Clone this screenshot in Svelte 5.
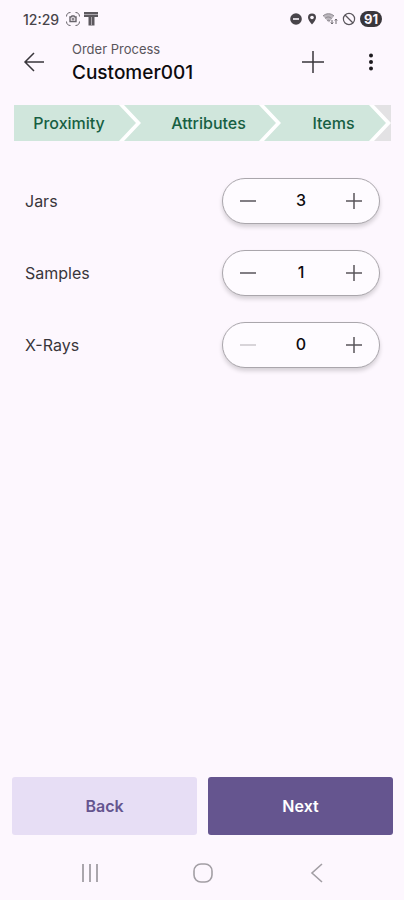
<script lang="ts">
  interface Item {
    id: string;
    name: string;
    count: number;
  }

  const steps = ['Proximity', 'Attributes', 'Items'];

  let items = $state<Item[]>([
    { id: 'jars', name: 'Jars', count: 3 },
    { id: 'samples', name: 'Samples', count: 1 },
    { id: 'xrays', name: 'X-Rays', count: 0 },
  ]);

  function change(item: Item, amount: number) {
    item.count = Math.max(0, item.count + amount);
  }
</script>

<div class="screen">
  <div class="status-bar">
    <span class="time">12:29</span>
    <svg class="capture" width="16" height="16" viewBox="0 0 16 16" fill="none" stroke="#67636a">
      <path d="M1.5 5.5C1.5 3 3 1.5 5.5 1.5M10.5 1.5C13 1.5 14.5 3 14.5 5.5M14.5 10.5C14.5 13 13 14.5 10.5 14.5M5.5 14.5C3 14.5 1.5 13 1.5 10.5" />
      <path d="M5 6h1l1-1h2l1 1h1v4.5H5z" stroke-width="1.4" />
      <circle cx="8" cy="8" r="1" />
    </svg>
    <svg width="16" height="16" viewBox="0 0 16 16">
      <path d="M1 1h14v5h-3.5v8.5h-6V6H1z" fill="#5c585e" />
      <path d="M1 3.5h14M8.5 6v8" stroke="#aaa5ac" />
    </svg>

    <div class="status-icons">
      <svg width="12" height="12" viewBox="0 0 12 12">
        <circle cx="6" cy="6" r="5.8" fill="#48444a" />
        <path d="M3 6h6" stroke="#d8d3da" stroke-width="2" />
      </svg>
      <svg width="12" height="12" viewBox="-1 0 12 12">
        <path d="M5 .5a4 4 0 0 0-4 4C1 7.2 5 11.5 5 11.5s4-4.3 4-7a4 4 0 0 0-4-4z" fill="#48444a" />
        <circle cx="5" cy="4.5" r="1.8" fill="#fcf7fd" />
      </svg>
      <svg width="16" height="14" viewBox="0 0 16 14">
        <path d="M1 4C4 1 9 1 12 4L7 10.5z" fill="#bbb6bd" />
        <path d="M1 4C4 1 9 1 12 4M3 6.5c2-2 4.5-2 6.5 0M5 9c1-1 2-1 3 0" fill="none" stroke="#8a858c" />
        <path d="M10 8v4M8.8 10.5 10 12l1.2-1.5M14 12V7M12.8 8.5 14 7l1.2 1.5" fill="none" stroke="#6c686e" />
      </svg>
      <svg width="14" height="14" viewBox="0 0 14 14" fill="none" stroke="#59555b" stroke-width="1.2">
        <circle cx="7" cy="7" r="5.6" />
        <path d="m3 3 8 8" />
      </svg>
      <span class="battery">91</span>
    </div>
  </div>

  <header>
    <button type="button" class="icon-btn" aria-label="Go back">
      <svg width="24" height="24" viewBox="0 0 24 24" fill="none" stroke="#39363b" stroke-width="1.5">
        <path d="M22 12H3M12 3l-9 9 9 9" />
      </svg>
    </button>
    <div class="titles">
      <p>Order Process</p>
      <h1>Customer001</h1>
    </div>
    <button type="button" class="icon-btn" aria-label="Add">
      <svg width="24" height="24" viewBox="0 0 24 24" stroke="#39363b" stroke-width="1.5">
        <path d="M12 1v22M1 12h22" />
      </svg>
    </button>
    <button type="button" class="icon-btn more" aria-label="More options">
      <svg width="24" height="24" viewBox="0 0 24 24" fill="#1d1a1f">
        <circle cx="12" cy="5.5" r="2" />
        <circle cx="12" cy="12" r="2" />
        <circle cx="12" cy="18.5" r="2" />
      </svg>
    </button>
  </header>

  <ol class="steps">
    {#each steps as step}
      <li>{step}</li>
    {/each}
    <li class="upcoming" aria-hidden="true"></li>
  </ol>

  <main>
    {#each items as item (item.id)}
      <div class="row">
        <span id={item.id}>{item.name}</span>
        <div class="counter" role="group" aria-labelledby={item.id}>
          <button
            type="button"
            aria-label="Remove one"
            disabled={item.count === 0}
            onclick={() => change(item, -1)}
          >
            <svg width="18" height="18" viewBox="0 0 18 18" stroke="currentColor" stroke-width="1.5">
              <path d="M1 9h16" />
            </svg>
          </button>
          <output>{item.count}</output>
          <button type="button" aria-label="Add one" onclick={() => change(item, 1)}>
            <svg width="18" height="18" viewBox="0 0 18 18" stroke="currentColor" stroke-width="1.5">
              <path d="M1 9h16M9 1v16" />
            </svg>
          </button>
        </div>
      </div>
    {/each}
  </main>

  <div class="actions">
    <button type="button" class="back">Back</button>
    <button type="button" class="next">Next</button>
  </div>

  <nav>
    <button type="button" aria-label="Recent apps">
      <svg width="22" height="22" viewBox="0 0 22 22" stroke="#aaa6ac" stroke-width="2">
        <path d="M4 2v18M11 2v18M18 2v18" />
      </svg>
    </button>
    <button type="button" aria-label="Home">
      <svg width="22" height="22" viewBox="0 0 22 22" fill="none" stroke="#a29ea4" stroke-width="1.6">
        <rect x="2" y="2" width="18" height="18" rx="7" />
      </svg>
    </button>
    <button type="button" aria-label="Back">
      <svg width="22" height="22" viewBox="0 0 22 22" fill="none" stroke="#a29ea4" stroke-width="1.6">
        <path d="M17 2 7 11l10 9" />
      </svg>
    </button>
  </nav>
</div>

<style>
  :global(body) {
    margin: 0;
    background: #fdf7fe;
  }

  .screen {
    display: flex;
    flex-direction: column;
    min-height: 100vh;
    font-family: Inter, Roboto, sans-serif;
    color: #1d1a1f;
  }

  button {
    display: flex;
    align-items: center;
    justify-content: center;
    padding: 0;
    border: none;
    background: none;
    font: inherit;
    color: inherit;
    cursor: pointer;
  }

  .status-bar {
    display: flex;
    align-items: center;
    gap: 2px;
    height: 38px;
    padding: 0 22px 0 23px;
    color: #48444a;
  }

  .time {
    font-size: 14px;
    font-weight: 500;
  }

  .capture {
    margin-left: 4px;
  }

  .status-icons {
    display: flex;
    align-items: center;
    gap: 4px;
    margin-left: auto;
  }

  .battery {
    padding: 0 4px;
    border-radius: 8px;
    background: #39363b;
    color: #fcf7fd;
    font-size: 13px;
    font-weight: 700;
    line-height: 16px;
  }

  header {
    display: flex;
    align-items: center;
    height: 48px;
    padding: 0 12px 0 13px;
  }

  .icon-btn {
    width: 42px;
    height: 42px;
  }

  .more {
    margin-left: 16px;
  }

  .titles {
    flex: 1;
    padding: 2px 0 0 17px;
  }

  p,
  h1 {
    margin: 0;
  }

  p {
    font-size: 13px;
    line-height: 20px;
    color: #59555b;
  }

  h1 {
    font-size: 19px;
    font-weight: 500;
    line-height: 28px;
    color: #0d0b0e;
  }

  .steps {
    display: flex;
    margin: 19px 13px 0 14px;
    padding: 0;
    list-style: none;
    background: #ffffff;
  }

  .steps li {
    flex: 21;
    display: flex;
    align-items: center;
    justify-content: center;
    box-sizing: border-box;
    height: 36px;
    margin-left: -12px;
    padding-left: 17px;
    background: #d0e6dc;
    color: #175f43;
    font-size: 16px;
    font-weight: 500;
    clip-path: polygon(0 0, calc(100% - 17px) 0, 100% 50%, calc(100% - 17px) 100%, 0 100%, 17px 50%);
  }

  .steps li:first-child {
    flex: 22;
    margin-left: 0;
    padding: 0 12px 0 0;
    clip-path: polygon(0 0, calc(100% - 17px) 0, 100% 50%, calc(100% - 17px) 100%, 0 100%);
  }

  .steps li:nth-child(2) {
    flex: 27;
  }

  .steps .upcoming {
    flex: 0 0 17px;
    padding: 0;
    background: #e3e2e4;
    clip-path: polygon(0 0, 100% 0, 100% 100%, 0 100%, 17px 50%);
  }

  main {
    flex: 1;
    display: flex;
    flex-direction: column;
    gap: 26px;
    padding: 37px 24px 24px 25px;
  }

  .row {
    display: flex;
    align-items: center;
    justify-content: space-between;
    font-size: 16px;
    color: #39363b;
  }

  .counter {
    display: flex;
    align-items: center;
    justify-content: space-between;
    box-sizing: border-box;
    width: 158px;
    height: 46px;
    padding: 0 8px;
    border: 1px solid #aaa6ac;
    border-radius: 23px;
    background: #fefbff;
    box-shadow: 0 3px 4px rgba(0, 0, 0, 0.16);
  }

  .counter button {
    width: 34px;
    height: 34px;
    color: #59555b;
  }

  .counter button:disabled {
    color: #cbc7cd;
    cursor: default;
  }

  output {
    padding-bottom: 2px;
    font-size: 16px;
    font-weight: 500;
    color: #0d0b0e;
  }

  .actions {
    display: flex;
    gap: 11px;
    padding: 0 11px 0 12px;
  }

  .actions button {
    flex: 1;
    height: 58px;
    border-radius: 3px;
    font-size: 16px;
    font-weight: 600;
  }

  .actions .back {
    background: #e7def5;
    color: #65558f;
  }

  .actions .next {
    background: #65558f;
    color: #ffffff;
  }

  nav {
    display: flex;
    padding: 16px 32px 5px 34px;
  }

  nav button {
    flex: 1;
    height: 44px;
  }
</style>
